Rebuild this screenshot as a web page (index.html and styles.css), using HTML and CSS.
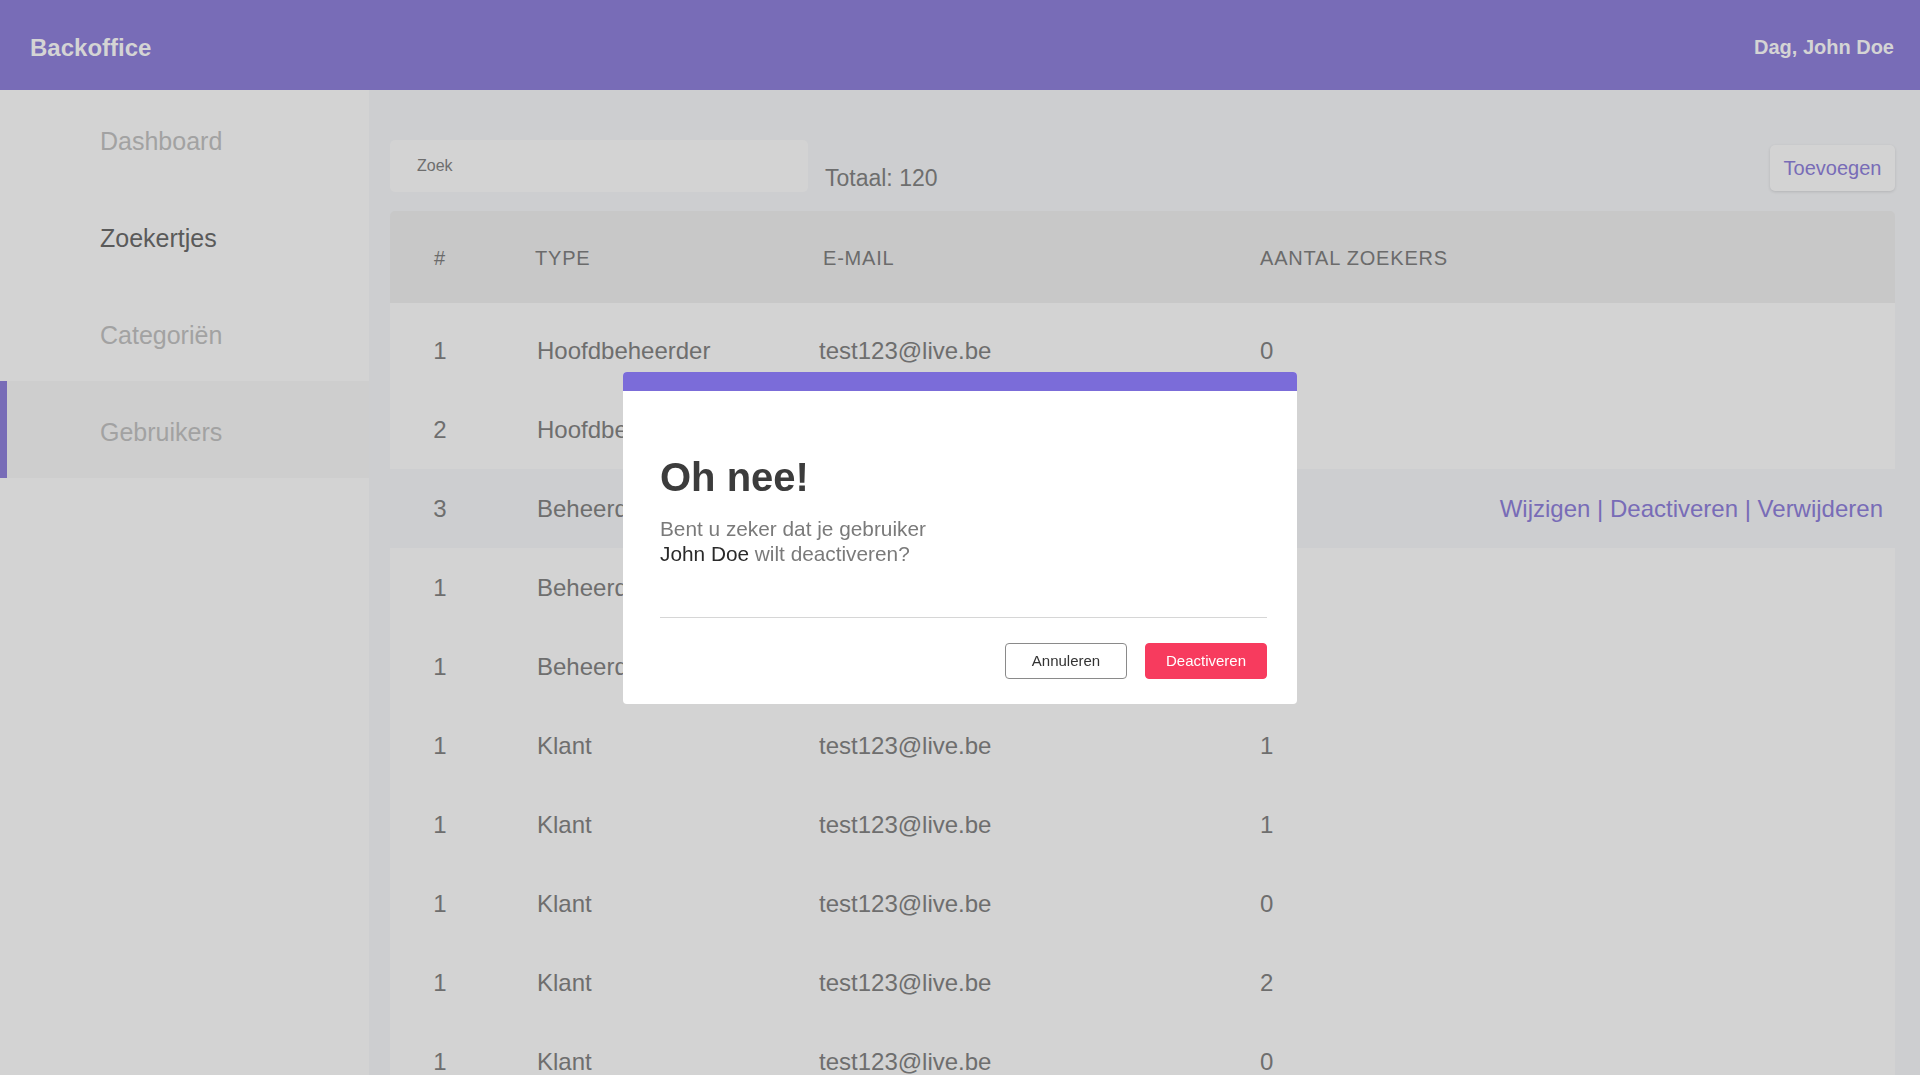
FILE: index.html
```html
<!DOCTYPE html>
<html lang="nl">
<head>
<meta charset="utf-8">
<title>Backoffice</title>
<link rel="stylesheet" href="styles.css">
</head>
<body>
<header class="topbar">
  <div class="brand">Backoffice</div>
  <div class="greeting">Dag, John Doe</div>
</header>
<div class="layout">
  <nav class="sidebar">
    <a class="nav-item">Dashboard</a>
    <a class="nav-item nav-item--hover">Zoekertjes</a>
    <a class="nav-item">Categoriën</a>
    <a class="nav-item nav-item--active">Gebruikers</a>
  </nav>
  <main class="content">
    <div class="toolbar">
      <div class="search">Zoek</div>
      <div class="total">Totaal: 120</div>
      <button class="add-btn">Toevoegen</button>
    </div>
    <div class="table">
      <div class="thead row-grid">
        <div class="c-num">#</div>
        <div class="c-type">TYPE</div>
        <div class="c-mail">E-MAIL</div>
        <div class="c-count">AANTAL ZOEKERS</div>
        <div></div>
      </div>
      <div class="tbody">
        <div class="trow row-grid"><div class="c-num">1</div><div class="c-type">Hoofdbeheerder</div><div class="c-mail">test123@live.be</div><div class="c-count">0</div><div></div></div>
        <div class="trow row-grid"><div class="c-num">2</div><div class="c-type">Hoofdbeheerder</div><div class="c-mail">test123@live.be</div><div class="c-count">1</div><div></div></div>
        <div class="trow trow--hl row-grid"><div class="c-num">3</div><div class="c-type">Beheerder</div><div class="c-mail">test123@live.be</div><div class="c-count">0</div><div class="c-actions"><a>Wijzigen</a> | <a>Deactiveren</a> | <a>Verwijderen</a></div></div>
        <div class="trow row-grid"><div class="c-num">1</div><div class="c-type">Beheerder</div><div class="c-mail">test123@live.be</div><div class="c-count">2</div><div></div></div>
        <div class="trow row-grid"><div class="c-num">1</div><div class="c-type">Beheerder</div><div class="c-mail">test123@live.be</div><div class="c-count">0</div><div></div></div>
        <div class="trow row-grid"><div class="c-num">1</div><div class="c-type">Klant</div><div class="c-mail">test123@live.be</div><div class="c-count">1</div><div></div></div>
        <div class="trow row-grid"><div class="c-num">1</div><div class="c-type">Klant</div><div class="c-mail">test123@live.be</div><div class="c-count">1</div><div></div></div>
        <div class="trow row-grid"><div class="c-num">1</div><div class="c-type">Klant</div><div class="c-mail">test123@live.be</div><div class="c-count">0</div><div></div></div>
        <div class="trow row-grid"><div class="c-num">1</div><div class="c-type">Klant</div><div class="c-mail">test123@live.be</div><div class="c-count">2</div><div></div></div>
        <div class="trow row-grid"><div class="c-num">1</div><div class="c-type">Klant</div><div class="c-mail">test123@live.be</div><div class="c-count">0</div><div></div></div>
      </div>
    </div>
  </main>
</div>

<div class="overlay">
  <div class="modal">
    <div class="modal-accent"></div>
    <div class="modal-body">
      <h2 class="modal-title">Oh nee!</h2>
      <p class="modal-text">Bent u zeker dat je gebruiker<br><strong>John Doe</strong> wilt deactiveren?</p>
      <hr class="modal-divider">
      <div class="modal-actions">
        <button class="btn btn--outline">Annuleren</button>
        <button class="btn btn--danger">Deactiveren</button>
      </div>
    </div>
  </div>
</div>
</body>
</html>
```
FILE: styles.css
```css
* { box-sizing: border-box; }
html, body {
  margin: 0;
  height: 100%;
  overflow: hidden;
}
body {
  font-family: "Liberation Sans", Arial, sans-serif;
  background: #cdced0;
  color: #6e6e6e;
}

.topbar {
  height: 90px;
  background: #786cb7;
  display: flex;
  align-items: center;
  justify-content: space-between;
  padding: 5px 26px 0 30px;
}
.brand {
  font-size: 24px;
  font-weight: bold;
  color: #d4d4d4;
}
.greeting {
  font-size: 20px;
  font-weight: bold;
  color: #d4d4d4;
}

.layout {
  display: flex;
  height: calc(100% - 90px);
}
.sidebar {
  width: 369px;
  flex: 0 0 369px;
  background: #d3d3d3;
  display: flex;
  flex-direction: column;
}
.nav-item {
  height: 97px;
  display: flex;
  align-items: center;
  padding: 5px 0 0 100px;
  font-size: 25px;
  color: #a2a2a2;
}
.nav-item--hover { color: #5a5a5a; }
.nav-item--active {
  background: #cecece;
  border-left: 7px solid #786cb7;
  padding-left: 93px;
}

.content {
  flex: 1;
  padding: 50px 25px 0 21px;
}
.toolbar {
  display: flex;
  align-items: flex-start;
}
.search {
  width: 418px;
  height: 52px;
  background: #d3d3d3;
  border-radius: 5px;
  display: flex;
  align-items: center;
  padding-left: 27px;
  font-size: 16px;
  color: #6e6e6e;
}
.total {
  margin-left: 17px;
  margin-top: 25px;
  font-size: 23px;
  color: #6e6e6e;
}
.add-btn {
  margin-left: auto;
  margin-top: 5px;
  height: 46px;
  width: 125px;
  border: none;
  border-radius: 5px;
  background: #d3d3d3;
  box-shadow: 0 1px 3px rgba(0,0,0,0.12);
  font-family: inherit;
  font-size: 20px;
  color: #786cb7;
}

.table { margin-top: 19px; }
.row-grid {
  display: grid;
  grid-template-columns: 100px 327px 443px 1fr auto;
  align-items: center;
}
.thead {
  height: 92px;
  padding-top: 2px;
  background: #c8c8c8;
  border-radius: 5px 5px 0 0;
  font-size: 20px;
  letter-spacing: 0.8px;
  color: #6b6b6b;
}
.thead .c-type { padding-left: 45px; }
.thead .c-mail { padding-left: 6px; }
.tbody {
  background: #d3d3d3;
  padding-top: 8px;
}
.trow {
  height: 79px;
  font-size: 24px;
  color: #6e6e6e;
  background: #d3d3d3;
}
.trow--hl {
  background: #cdced0;
}
.c-num { text-align: center; }
.trow .c-type { padding-left: 47px; }
.trow .c-mail { padding-left: 2px; }
.c-actions {
  padding-right: 12px;
  color: #786cb7;
  white-space: nowrap;
}

.overlay {
  position: fixed;
  inset: 0;
  display: flex;
  align-items: center;
  justify-content: center;
}
.modal {
  width: 674px;
  background: #ffffff;
  border-radius: 4px;
  overflow: hidden;
}
.modal-accent {
  height: 19px;
  background: #7b6cd9;
}
.modal-body {
  padding: 63px 30px 25px 37px;
}
.modal-title {
  margin: 0;
  font-size: 40px;
  line-height: 46px;
  font-weight: bold;
  color: #3c3c3c;
}
.modal-text {
  margin: 16px 0 0;
  font-size: 20.8px;
  line-height: 25px;
  color: #7a7a7a;
}
.modal-text strong {
  font-weight: normal;
  color: #2a2a2a;
}
.modal-divider {
  margin: 51px 0 0;
  border: none;
  border-top: 1px solid #d6d6d6;
  height: 0;
}
.modal-actions {
  margin-top: 25px;
  display: flex;
  justify-content: flex-end;
  gap: 18px;
}
.btn {
  width: 122px;
  height: 36px;
  border-radius: 4px;
  font-family: inherit;
  font-size: 15px;
}
.btn--outline {
  background: #ffffff;
  border: 1px solid #8a8a8a;
  color: #333333;
}
.btn--danger {
  background: #f73b5e;
  border: 1px solid #f73b5e;
  color: #ffffff;
}
```
